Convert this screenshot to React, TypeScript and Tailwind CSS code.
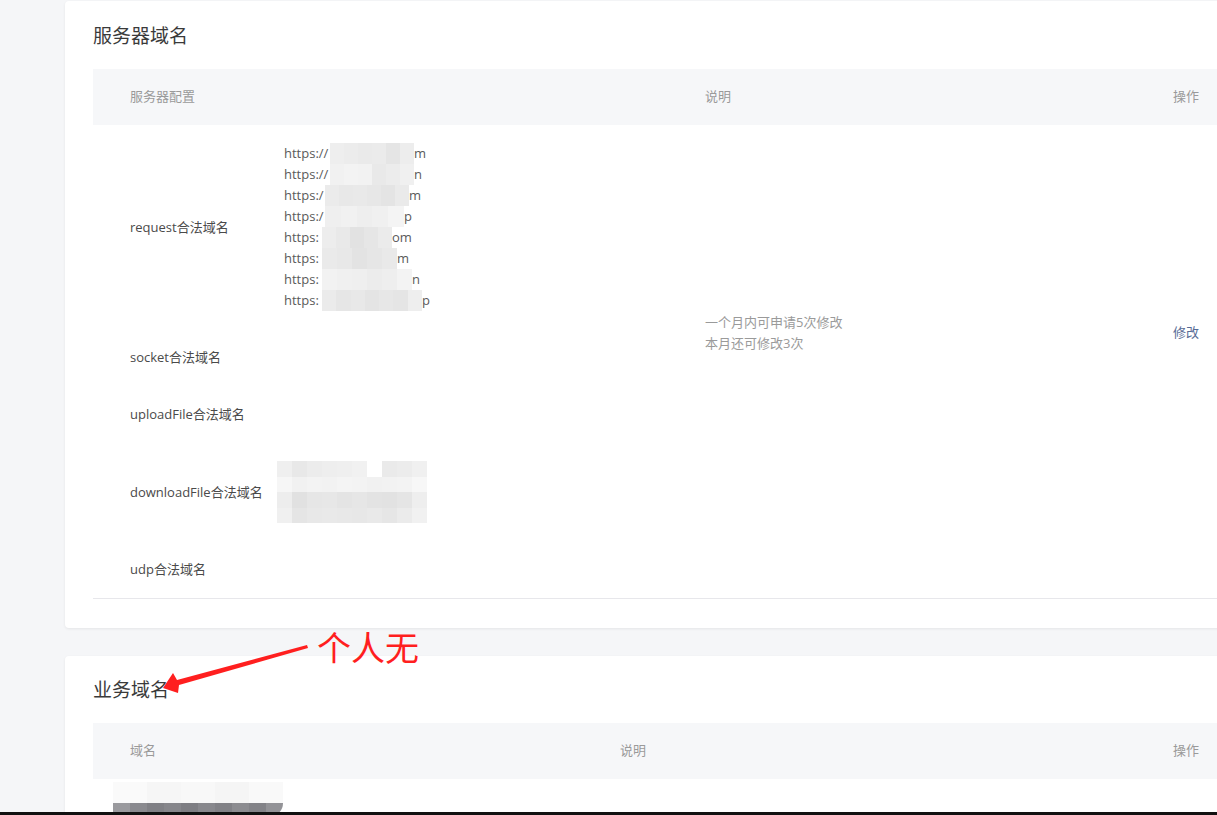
import React from "react";

const font = { fontFamily: '"Open Sans", "Noto Sans CJK SC", sans-serif' };

const urlLines = [
  { pre: "https://", preW: "w-[46px]", mosW: "w-[84px]", suf: "m", cells: ["#eeeeee", "#ececec", "#eaeaea", "#ebebeb", "#e5e5e5", "#ededed"] },
  { pre: "https://", preW: "w-[46px]", mosW: "w-[84px]", suf: "n", cells: ["#f1f1f1", "#f3f3f3", "#f2f2f2", "#e9e9e9", "#ececec", "#f0f0f0"] },
  { pre: "https:/", preW: "w-[41px]", mosW: "w-[84px]", suf: "m", cells: ["#ebebeb", "#e8e8e8", "#e9e9e9", "#e7e7e7", "#e4e4e4", "#eaeaea"] },
  { pre: "https:/", preW: "w-[41px]", mosW: "w-[79px]", suf: "p", cells: ["#efefef", "#f1f1f1", "#eeeeee", "#f0f0f0", "#f4f4f4"] },
  { pre: "https:", preW: "w-[38px]", mosW: "w-[70px]", suf: "om", cells: ["#ededed", "#e9e9e9", "#e2e2e2", "#e6e6e6", "#ebebeb"] },
  { pre: "https:", preW: "w-[38px]", mosW: "w-[75px]", suf: "m", cells: ["#eaeaea", "#e8e8e8", "#e3e3e3", "#e6e6e6", "#e9e9e9"] },
  { pre: "https:", preW: "w-[38px]", mosW: "w-[90px]", suf: "n", cells: ["#f2f2f2", "#f0f0f0", "#efefef", "#ececec", "#eeeeee", "#f3f3f3"] },
  { pre: "https:", preW: "w-[38px]", mosW: "w-[100px]", suf: "p", cells: ["#ebebeb", "#e6e6e6", "#e8e8e8", "#e4e4e4", "#e7e7e7", "#e5e5e5", "#eeeeee"] },
];

const downloadMosaic = [
  ["#efefef", "#e8e8e8", "#ececec", "#eeeeee", "#efefef", "#f1f1f1", "#ffffff", "#eaeaea", "#ececec", "#f0f0f0"],
  ["#f6f6f6", "#f1f1f1", "#f3f3f3", "#f2f2f2", "#f4f4f4", "#f3f3f3", "#f1f1f1", "#f2f2f2", "#f3f3f3", "#f7f7f7"],
  ["#ededed", "#e1e1e1", "#e6e6e6", "#e7e7e7", "#e4e4e4", "#e6e6e6", "#e3e3e3", "#e2e2e2", "#e5e5e5", "#eeeeee"],
  ["#f0f0f0", "#e5e5e5", "#e8e8e8", "#e9e9e9", "#e8e8e8", "#e7e7e7", "#e9e9e9", "#e6e6e6", "#ebebeb", "#f1f1f1"],
];

const bottomMosaic = ["#9a9a9e", "#8a8a8f", "#808085", "#86868b", "#7e7e83", "#88888d", "#818186", "#8c8c90", "#838388", "#939397"];

function UrlList() {
  return (
    <div className="text-[13px] leading-[21px] text-[#5a5a5a]">
      {urlLines.map((l, i) => (
        <div key={i} className="flex h-[21px] items-center">
          <span className={`${l.preW} shrink-0 overflow-hidden whitespace-nowrap`}>{l.pre}</span>
          <div className={`${l.mosW} flex h-full shrink-0`}>
            {l.cells.map((c, j) => (
              <div key={j} className="h-full flex-1" style={{ backgroundColor: c }} />
            ))}
          </div>
          <span>{l.suf}</span>
        </div>
      ))}
    </div>
  );
}

function DownloadBlur() {
  return (
    <div className="-ml-[7px] flex h-[62px] w-[150px] flex-col">
      {downloadMosaic.map((row, i) => (
        <div key={i} className="flex flex-1">
          {row.map((c, j) => (
            <div key={j} className="flex-1" style={{ backgroundColor: c }} />
          ))}
        </div>
      ))}
    </div>
  );
}

const rows = [
  { label: "request合法域名", content: <UrlList /> },
  { label: "socket合法域名", content: <div className="h-[21px]" /> },
  { label: "uploadFile合法域名", content: <div className="h-[21px]" /> },
  { label: "downloadFile合法域名", content: <DownloadBlur /> },
  { label: "udp合法域名", content: <div className="h-[21px]" /> },
];

export default function App() {
  return (
    <div className="relative flex h-[815px] w-full flex-col overflow-hidden bg-[#f5f6f8]" style={font}>
      <div className="min-h-0 flex-1 overflow-hidden pl-[65px] pt-px">
        {/* 服务器域名 */}
        <div className="w-[1180px] rounded bg-white px-7 pb-[29px] pt-[23px] shadow-[0_1px_3px_rgba(0,0,0,0.07)]">
          <h2 className="text-[19px] leading-6 text-[#3a3a3a]">服务器域名</h2>
          <div className="mt-[21px] flex h-14 items-center bg-[#f6f7f9] text-[13px] text-[#9a9a9a]">
            <div className="w-[612px] pl-[37px]">服务器配置</div>
            <div className="w-[468px]">说明</div>
            <div>操作</div>
          </div>
          <div className="flex border-b border-[#e7e7eb] text-[13px]">
            <div className="w-[612px] pl-[37px]">
              {rows.map((r) => (
                <div key={r.label} className="flex items-center py-[18px]">
                  <span className="w-[154px] shrink-0 leading-[21px] text-[#4a4a4a]">{r.label}</span>
                  {r.content}
                </div>
              ))}
            </div>
            <div className="w-[468px] pt-[187px] leading-[21px] text-[#9a9a9a]">
              <p>一个月内可申请5次修改</p>
              <p>本月还可修改3次</p>
            </div>
            <div className="pt-[197px] leading-[21px] text-[#576b95]">修改</div>
          </div>
        </div>

        {/* 业务域名 */}
        <div className="mt-[28px] w-[1180px] rounded bg-white px-7 pb-[29px] pt-[22px] shadow-[0_1px_3px_rgba(0,0,0,0.07)]">
          <h2 className="text-[19px] leading-6 text-[#3a3a3a]">业务域名</h2>
          <div className="mt-[21px] flex h-14 items-center bg-[#f6f7f9] text-[13px] text-[#9a9a9a]">
            <div className="w-[527px] pl-[37px]">域名</div>
            <div className="w-[553px]">说明</div>
            <div>操作</div>
          </div>
          <div className="ml-[20px] mt-[3px] w-[170px]">
            <div className="flex h-[21px]">
              <div className="flex-1 bg-[#fafafa]" />
              <div className="flex-1 bg-[#f6f6f6]" />
              <div className="flex-1 bg-[#f8f8f8]" />
              <div className="flex-1 bg-[#f5f5f5]" />
              <div className="flex-1 bg-[#f9f9f9]" />
            </div>
            <div className="flex h-[14px] overflow-hidden rounded-bl-md rounded-br-2xl">
              {bottomMosaic.map((c, i) => (
                <div key={i} className="flex-1" style={{ backgroundColor: c }} />
              ))}
            </div>
          </div>
        </div>
      </div>
      <div className="h-[3px] shrink-0 bg-[#111]" />

      {/* annotation */}
      <svg className="pointer-events-none absolute left-[155px] top-[640px]" width="160" height="60" viewBox="0 0 160 60">
        <polygon points="8,48 18,33 22,40 152,5 153,8 24,45 23,53" fill="#ff1f1f" />
      </svg>
      <div className="pointer-events-none absolute left-[317px] top-[630px] text-[34px] leading-none text-[#ff1f1f]" style={{ fontFamily: '"Noto Sans CJK SC", sans-serif' }}>
        个人无
      </div>
    </div>
  );
}
